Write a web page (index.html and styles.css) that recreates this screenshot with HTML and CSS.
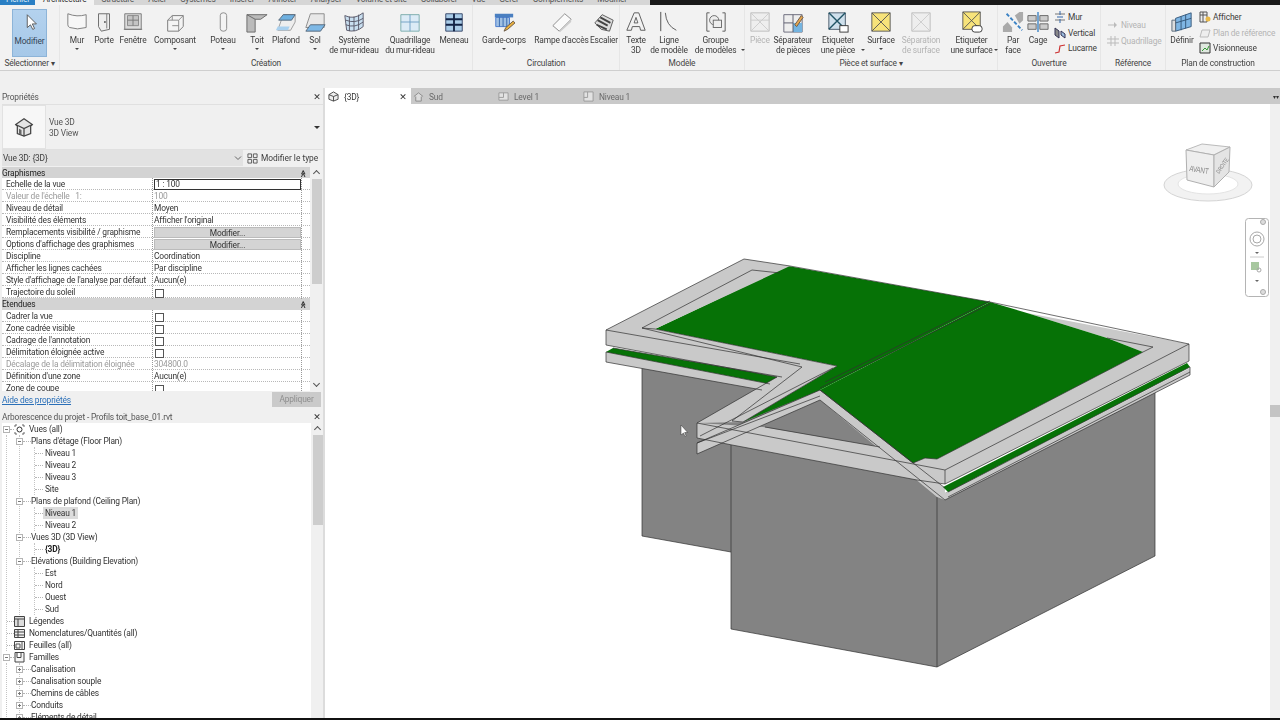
FILE: index.html
```html
<!DOCTYPE html>
<html lang="fr">
<head>
<meta charset="utf-8">
<title>Revit - Profils toit_base_01.rvt</title>
<link rel="stylesheet" href="styles.css">
</head>
<body>
<div class="app">
  <nav class="menu">
    <span class="mtab file">Fichier</span><span class="mtab active">Architecture</span><span class="mtab">Structure</span><span class="mtab">Acier</span><span class="mtab">Systèmes</span><span class="mtab">Insérer</span><span class="mtab">Annoter</span><span class="mtab">Analyser</span><span class="mtab">Volume et site</span><span class="mtab">Collaborer</span><span class="mtab">Vue</span><span class="mtab">Gérer</span><span class="mtab">Compléments</span><span class="mtab">Modifier</span>
    <span class="menu-end"></span>
  </nav>

  <section class="ribbon">
    <div class="panel p-select">
      <div class="tools center">
        <div class="modify">
          <svg class="ico" viewBox="0 0 24 24"><path d="M9 3v14l3.500-3 2.500 5 2-1-2.500-5H19z" fill="#fff" stroke="#555"/></svg>
          <span class="lbl">Modifier</span>
        </div>
      </div>
      <div class="plabel">Sélectionner ▾</div>
    </div>

    <div class="panel p-create">
      <div class="tools">
        <div class="tool w34"><svg class="ico" viewBox="0 0 24 24"><path d="M2 3q10 4 20 1v14q-10 3-18 0q-2-1-2-3z" fill="#f7f7f7" stroke="#777"/></svg><span class="lbl">Mur</span><i class="caret"></i></div>
        <div class="tool w20"><svg class="ico" viewBox="0 0 24 24"><path d="M6 3h12v17l-9 2-3-5z" fill="#eee" stroke="#666"/><path d="M15 3v16" stroke="#777"/><circle cx="13" cy="12" r="1" fill="#555"/></svg><span class="lbl">Porte</span></div>
        <div class="tool w38"><svg class="ico" viewBox="0 0 24 24"><path d="M3 3h18v17H3z" fill="#ddd" stroke="#777"/><path d="M6 5h12v11H6z" fill="#c4c4c4" stroke="#888"/><path d="M12 5v11M6 10h12M2 20h20" stroke="#777"/></svg><span class="lbl">Fenêtre</span></div>
        <div class="tool w46"><svg class="ico" viewBox="0 0 24 24"><path d="M4 10l5-5h12v12l-5 5H4z" fill="#f4f4f4" stroke="#777"/><path d="M4 10h12v12M16 10l5-5M9 5v5M9 16h7" fill="none" stroke="#888"/></svg><span class="lbl">Composant</span><i class="caret"></i></div>
        <div class="tool w50"><svg class="ico" viewBox="0 0 24 24"><rect x="9" y="2" width="7" height="20" rx="3" fill="#f4f4f4" stroke="#888"/></svg><span class="lbl">Poteau</span><i class="caret"></i></div>
        <div class="tool w18"><svg class="ico" viewBox="0 0 24 24"><path d="M1 4h22l-7 5h-6v14H1z" fill="#bbb" stroke="#666"/><path d="M1 4l9 5" stroke="#666"/></svg><span class="lbl">Toit</span><i class="caret"></i></div>
        <div class="tool w40"><svg class="ico" viewBox="0 0 24 24"><path d="M9 4h13v8l-5 9H3z" fill="#eee" stroke="#999"/><path d="M9 4h13l-4 6H4z" fill="#6eb0e0" stroke="#567"/><path d="M3 17h13l-2 4H1z" fill="#a9d0ee"/></svg><span class="lbl">Plafond</span></div>
        <div class="tool w18"><svg class="ico" viewBox="0 0 24 24"><path d="M7 3h15v15H2z" fill="#e8e8e8" stroke="#888"/><path d="M7 15h16l-5 7H2z" fill="#7db8e6" stroke="#567"/></svg><span class="lbl">Sol</span><i class="caret"></i></div>
        <div class="tool w60"><svg class="ico" viewBox="0 0 24 24"><path d="M2 5q10 5 20-3v15q-8 7-18 4z" fill="#c9dff0" stroke="#556"/><path d="M7 6v16M12 6v16M17 4v16M3 10q10 4 19-2M3 15q10 4 19-3" fill="none" stroke="#556"/></svg><span class="lbl">Système<br>de mur-rideau</span></div>
        <div class="tool w52"><svg class="ico" viewBox="0 0 24 24"><path d="M2 4h20v18H2z" fill="#dcebf6" stroke="#7aa"/><path d="M2 12h20M12 4v18" stroke="#6f9fc4"/></svg><span class="lbl">Quadrillage<br>du mur-rideau</span></div>
        <div class="tool w36"><svg class="ico" viewBox="0 0 24 24"><path d="M3 3h18v19H3z" fill="#a9cce8" stroke="#346"/><path d="M12 3v19M3 9h18M3 15h18" stroke="#124" stroke-width="2"/></svg><span class="lbl">Meneau</span></div>
      </div>
      <div class="plabel">Création</div>
    </div>

    <div class="panel p-circ">
      <div class="tools">
        <div class="tool w62"><svg class="ico" viewBox="0 0 24 24"><path d="M2 3h20v4H2z" fill="#4a7fc0"/><path d="M3 7h15v10H3z" fill="#9fc0e4" stroke="#47c"/><path d="M7 7v10M11 7v10M15 7v10" stroke="#36a"/><path d="M12 22l2-4 8-7 2 2-8 7z" fill="#e8b040" stroke="#654"/></svg><span class="lbl">Garde-corps</span><i class="caret"></i></div>
        <div class="tool w53"><svg class="ico" viewBox="0 0 24 24"><path d="M2 16L15 3l7 6-13 13z" fill="#fafafa" stroke="#888"/><path d="M9 22l13-13v3L10 23z" fill="#ccc"/></svg><span class="lbl">Rampe d'accès</span></div>
        <div class="tool w32"><svg class="ico" viewBox="0 0 24 24"><path d="M2 13l8-9 12 6-4 12-9-2z" fill="#ddd" stroke="#555"/><path d="M5 10l11 6M8 7l11 6M4 15l11 5" stroke="#444" stroke-width="2"/></svg><span class="lbl">Escalier</span></div>
      </div>
      <div class="plabel">Circulation</div>
    </div>

    <div class="panel p-model">
      <div class="tools">
        <div class="tool w32"><svg class="ico" viewBox="0 0 24 24"><path d="M2 21L10 2h5l7 19h-5l-1-4H8l-1 4z" fill="#f2f2f2" stroke="#555"/><path d="M10 13l2-6 2 6z" fill="#fff" stroke="#555"/></svg><span class="lbl">Texte<br>3D</span></div>
        <div class="tool w34"><svg class="ico" viewBox="0 0 24 24"><path d="M3 1v21" stroke="#444" fill="none"/><path d="M8 2q1 14 12 19" stroke="#555" fill="none"/></svg><span class="lbl">Ligne<br>de modèle</span></div>
        <div class="tool w59"><svg class="ico" viewBox="0 0 24 24"><path d="M5 2H2v20h3M19 2h3v20h-3" fill="none" stroke="#555"/><circle cx="10" cy="10" r="5" fill="#eee" stroke="#666"/><rect x="9" y="10" width="9" height="8" fill="#eee" stroke="#666"/></svg><span class="lbl">Groupe<br>de modèles</span><i class="caret side"></i></div>
      </div>
      <div class="plabel">Modèle</div>
    </div>

    <div class="panel p-room">
      <div class="tools">
        <div class="tool w30 off"><svg class="ico" viewBox="0 0 24 24"><path d="M2 2h20v20H2z" fill="#eee" stroke="#bbb"/><path d="M2 22L22 2M2 2l20 20M2 10h20" stroke="#ccc"/></svg><span class="lbl">Pièce</span></div>
        <div class="tool w36"><svg class="ico" viewBox="0 0 24 24"><path d="M2 4h20v19H2z" fill="#eee" stroke="#667"/><path d="M12 13h10v10H12z" fill="#74b4e0"/><path d="M12 4v19M2 13h10" stroke="#556"/><path d="M14 15l7-10 2 2-7 10z" fill="#e8a850" stroke="#654"/></svg><span class="lbl">Séparateur<br>de pièces</span></div>
        <div class="tool w54"><svg class="ico" viewBox="0 0 24 24"><path d="M2 2h18v18H2z" fill="#cfe0ec" stroke="#456"/><path d="M2 2l18 18M20 2L2 20" stroke="#256" stroke-width="1.500"/><rect x="14" y="16" width="9" height="7" fill="#fff" stroke="#333"/></svg><span class="lbl">Etiqueter<br>une pièce</span><i class="caret side"></i></div>
        <div class="tool w32"><svg class="ico" viewBox="0 0 24 24"><path d="M2 2h20v20H2z" fill="#f7e37a" stroke="#555"/><path d="M2 2l20 20M22 2L2 22" stroke="#555"/></svg><span class="lbl">Surface</span><i class="caret"></i></div>
        <div class="tool w48 off"><svg class="ico" viewBox="0 0 24 24"><path d="M2 2h20v20H2z" fill="#eee" stroke="#bbb"/><path d="M2 2l20 20M22 2L2 22" stroke="#ccc"/></svg><span class="lbl">Séparation<br>de surface</span></div>
        <div class="tool w53"><svg class="ico" viewBox="0 0 24 24"><path d="M2 1h19v19H2z" fill="#f7e37a" stroke="#555"/><path d="M2 1l19 19M21 1L2 20" stroke="#555"/><rect x="12" y="16" width="11" height="7" rx="3" fill="#fff" stroke="#333"/></svg><span class="lbl">Etiqueter<br>une surface</span><i class="caret side"></i></div>
      </div>
      <div class="plabel">Pièce et surface ▾</div>
    </div>

    <div class="panel p-open">
      <div class="tools">
        <div class="tool w30"><svg class="ico" viewBox="0 0 24 24"><path d="M14 5l5-4h4v9l-4 4z" fill="#aaa"/><path d="M1 17l5-5 5 6v5H1z" fill="#aaa"/><path d="M5 3l17 18" stroke="#3b82c4" stroke-width="2" stroke-dasharray="4 2"/></svg><span class="lbl">Par<br>face</span></div>
        <div class="tool w20"><svg class="ico" viewBox="0 0 24 24"><path d="M1 5h9v6H1zM14 5h9v6h-9zM1 14h9v6H1zM14 14h9v6h-9z" fill="#ccc" stroke="#666"/><path d="M12 1v22" stroke="#3b82c4" stroke-width="1.500"/></svg><span class="lbl">Cage</span></div>
        <div class="small-col col-open">
          <div class="small"><svg class="sico" viewBox="0 0 12 12"><path d="M1 3h10M1 9h10" stroke="#777"/><path d="M6 0v4M6 8v4M3 6h6" stroke="#36a"/></svg>Mur</div>
          <div class="small"><svg class="sico" viewBox="0 0 12 12"><path d="M1 1l4 3v7L1 8z" fill="#888" stroke="#335"/><path d="M7 4l4 3v4L7 8z" fill="#9bd" stroke="#335"/></svg>Vertical</div>
          <div class="small"><svg class="sico" viewBox="0 0 12 12"><path d="M1 11l4-1 1-6 5-1" fill="none" stroke="#c33" stroke-width="1.200"/></svg>Lucarne</div>
        </div>
      </div>
      <div class="plabel">Ouverture</div>
    </div>

    <div class="panel p-ref">
      <div class="tools">
        <div class="small-col col-ref off">
          <div class="small row-mid"><svg class="sico" viewBox="0 0 12 12"><path d="M1 6h6" stroke="#bbb"/><path d="M7 3l3 3-3 3z" fill="#bbb"/></svg>Niveau</div>
          <div class="small row-mid"><svg class="sico" viewBox="0 0 12 12"><path d="M0 4h12M0 8h12M4 1v10M8 1v10" stroke="#bbb"/></svg>Quadrillage</div>
        </div>
      </div>
      <div class="plabel">Référence</div>
    </div>

    <div class="panel p-plan">
      <div class="tools">
        <div class="tool w32"><svg class="ico" viewBox="0 0 24 24"><path d="M5 8l17-6v15L5 22z" fill="#7fb6e4" stroke="#357"/><path d="M1 10h4v12H1z" fill="#ddd" stroke="#567"/><path d="M11 6v15M16 4v15M5 13l17-5" stroke="#357"/></svg><span class="lbl">Définir</span></div>
        <div class="small-col col-plan">
          <div class="small"><svg class="sico" viewBox="0 0 12 12"><path d="M1 1h7v10H1z" fill="#eee" stroke="#555"/><circle cx="9" cy="8" r="2.500" fill="#e9b949"/><path d="M1 4h7M4 1v10" stroke="#555"/></svg>Afficher</div>
          <div class="small off"><svg class="sico" viewBox="0 0 12 12"><path d="M3 3h8L9 10H1z" fill="#eee" stroke="#bbb"/></svg>Plan de référence</div>
          <div class="small"><svg class="sico" viewBox="0 0 12 12"><path d="M1 1h10v10H1z" fill="#dfe8df" stroke="#333"/><path d="M3 9l3-3 2 2 2-4" stroke="#393" fill="none"/></svg>Visionneuse</div>
        </div>
      </div>
      <div class="plabel">Plan de construction</div>
    </div>
  </section>

  <div class="options"></div>

  <main class="main">
    <aside class="left">
      <div class="ptitle"><span>Propriétés</span><span class="close">✕</span></div>
      <div class="typebox">
        <div class="typeicon"><svg class="houseico" viewBox="0 0 24 24"><path d="M12 2L2 9l2 2v9l8 3 8-3v-9l2-2z" fill="#e4e4e4" stroke="#444" stroke-width="1.500"/><path d="M2 9l10 5 10-5M12 14v9" fill="none" stroke="#444" stroke-width="1.500"/><path d="M6 14l3 1.500v6L6 20z" fill="#666"/></svg></div>
        <div class="typetext"><span>Vue 3D</span><span>3D View</span></div>
        <span class="typecaret"></span>
      </div>
      <div class="selrow">
        <div class="select"><span>Vue 3D: {3D}</span><svg class="chev" viewBox="0 0 8 8"><path d="M1 2.500l3 3 3-3" fill="none" stroke="#666"/></svg></div>
        <div class="typebtn"><svg class="btnico" viewBox="0 0 12 12"><path d="M1 1h4v4H1zM7 1h4v4H7zM1 7h4v4H1zM7 7h4v4H7z" fill="#eee" stroke="#555"/></svg>Modifier le type</div>
      </div>

      <div class="proparea">
        <div class="proptable">
          <div class="pgroup" id="g1"><span>Graphismes</span><span class="fold">≪</span></div>
          <div class="prow"><span>Echelle de la vue</span><span class="val"><b class="input">1 : 100</b></span><i></i></div>
          <div class="prow dim"><span>Valeur de l'échelle &nbsp;&nbsp;1:</span><span class="val">100</span><i></i></div>
          <div class="prow"><span>Niveau de détail</span><span class="val">Moyen</span><i></i></div>
          <div class="prow"><span>Visibilité des éléments</span><span class="val">Afficher l'original</span><i></i></div>
          <div class="prow"><span>Remplacements visibilité / graphisme</span><span class="val"><b class="btn">Modifier...</b></span><i></i></div>
          <div class="prow"><span>Options d'affichage des graphismes</span><span class="val"><b class="btn">Modifier...</b></span><i></i></div>
          <div class="prow"><span>Discipline</span><span class="val">Coordination</span><i></i></div>
          <div class="prow"><span>Afficher les lignes cachées</span><span class="val">Par discipline</span><i></i></div>
          <div class="prow"><span>Style d'affichage de l'analyse par défaut</span><span class="val">Aucun(e)</span><i></i></div>
          <div class="prow"><span>Trajectoire du soleil</span><span class="val"><b class="check"></b></span><i></i></div>
          <div class="pgroup"><span>Etendues</span><span class="fold">≪</span></div>
          <div class="prow"><span>Cadrer la vue</span><span class="val"><b class="check"></b></span><i></i></div>
          <div class="prow"><span>Zone cadrée visible</span><span class="val"><b class="check"></b></span><i></i></div>
          <div class="prow"><span>Cadrage de l'annotation</span><span class="val"><b class="check"></b></span><i></i></div>
          <div class="prow"><span>Délimitation éloignée active</span><span class="val"><b class="check"></b></span><i></i></div>
          <div class="prow dim"><span>Décalage de la délimitation éloignée</span><span class="val">304800.0</span><i></i></div>
          <div class="prow"><span>Définition d'une zone</span><span class="val">Aucun(e)</span><i></i></div>
          <div class="prow"><span>Zone de coupe</span><span class="val"><b class="check"></b></span><i></i></div>
        </div>
        <div class="sb sb-prop"><span class="arrow up"></span><span class="thumb"></span><span class="sp"></span><span class="arrow down"></span></div>
      </div>
      <div class="helprow"><a class="help">Aide des propriétés</a><span class="apply">Appliquer</span></div>

      <div class="ptitle ptitle2"><span>Arborescence du projet - Profils toit_base_01.rvt</span><span class="close">✕</span></div>
      <div class="treearea">
        <div class="tree">
          <div class="troot"><span class="exp"></span><span class="dash d5"></span><svg class="tico" viewBox="0 0 11 11"><path d="M1 3V1h2M8 1h2v2M1 8v2h2M8 10h2V8" fill="none" stroke="#666"/><circle cx="5.500" cy="5.500" r="2.500" fill="none" stroke="#333"/></svg><span class="ttext">Vues (all)</span></div>
          <div class="rootwrap">
            <div class="bwrap">
              <div class="tl1"><span class="exp neg"></span><span class="dash d8"></span><span class="ttext1">Plans d'étage (Floor Plan)</span></div>
              <div class="lwrap">
                <div class="tl2"><span class="dash d8"></span><span class="ttext2">Niveau 1</span></div>
                <div class="tl2"><span class="dash d8"></span><span class="ttext2">Niveau 2</span></div>
                <div class="tl2"><span class="dash d8"></span><span class="ttext2">Niveau 3</span></div>
                <div class="tl2"><span class="dash d8"></span><span class="ttext2">Site</span></div>
              </div>
              <div class="tl1"><span class="exp neg"></span><span class="dash d8"></span><span class="ttext1">Plans de plafond (Ceiling Plan)</span></div>
              <div class="lwrap">
                <div class="tl2"><span class="dash d8"></span><span class="ttext2 sel">Niveau 1</span></div>
                <div class="tl2"><span class="dash d8"></span><span class="ttext2">Niveau 2</span></div>
              </div>
              <div class="tl1"><span class="exp neg"></span><span class="dash d8"></span><span class="ttext1">Vues 3D (3D View)</span></div>
              <div class="lwrap">
                <div class="tl2"><span class="dash d8"></span><span class="ttext2 strong">{3D}</span></div>
              </div>
              <div class="tl1"><span class="exp neg"></span><span class="dash d8"></span><span class="ttext1">Elévations (Building Elevation)</span></div>
              <div class="lwrap">
                <div class="tl2"><span class="dash d8"></span><span class="ttext2">Est</span></div>
                <div class="tl2"><span class="dash d8"></span><span class="ttext2">Nord</span></div>
                <div class="tl2"><span class="dash d8"></span><span class="ttext2">Ouest</span></div>
                <div class="tl2"><span class="dash d8"></span><span class="ttext2">Sud</span></div>
              </div>
            </div>
            <div class="tl0"><span class="dash d7"></span><svg class="tico" viewBox="0 0 11 11"><path d="M.5.5h10v10H.5z" fill="#ddd" stroke="#444"/><path d="M.5 3h10M4 3v7" stroke="#444"/></svg><span class="ttext">Légendes</span></div>
            <div class="tl0"><span class="dash d7"></span><svg class="tico" viewBox="0 0 11 11"><path d="M.5 1.500h10v8H.5z" fill="#eee" stroke="#444"/><path d="M.5 4h10M.5 7h10M4 1.500v8" stroke="#444"/></svg><span class="ttext">Nomenclatures/Quantités (all)</span></div>
            <div class="tl0"><span class="dash d7"></span><svg class="tico" viewBox="0 0 11 11"><path d="M.5 1.500h10v8H.5z" fill="#f5f5f5" stroke="#444"/><path d="M2 4h4v4H2zM8 1.500v8" fill="none" stroke="#555"/></svg><span class="ttext">Feuilles (all)</span></div>
          </div>
          <div class="troot"><span class="exp"></span><span class="dash d5"></span><svg class="tico" viewBox="0 0 11 11"><path d="M1 .5h9v9.500H1zM3 .5v5h4v-5" fill="#f5f5f5" stroke="#444"/></svg><span class="ttext">Familles</span></div>
          <div class="rootwrap">
            <div class="bwrap">
              <div class="tl1"><span class="exp plus neg"></span><span class="dash d8"></span><span class="ttext1">Canalisation</span></div>
              <div class="tl1"><span class="exp plus neg"></span><span class="dash d8"></span><span class="ttext1">Canalisation souple</span></div>
              <div class="tl1"><span class="exp plus neg"></span><span class="dash d8"></span><span class="ttext1">Chemins de câbles</span></div>
              <div class="tl1"><span class="exp plus neg"></span><span class="dash d8"></span><span class="ttext1">Conduits</span></div>
              <div class="tl1"><span class="exp plus neg"></span><span class="dash d8"></span><span class="ttext1">Eléments de détail</span></div>
            </div>
          </div>
        </div>
        <div class="sb sb-tree"><span class="arrow up"></span><span class="thumb"></span></div>
      </div>
    </aside>

    <section class="viewpane">
      <div class="vtabs">
        <div class="vtab current"><svg class="vico" viewBox="0 0 12 12"><path d="M6 1L1 4v5l5 2 5-2V4z" fill="#eee" stroke="#444"/><path d="M1 4l5 2 5-2M6 6v5" fill="none" stroke="#444"/></svg><span>{3D}</span><span class="close tabx">✕</span></div>
        <div class="vtab"><svg class="vico" viewBox="0 0 12 12"><path d="M1 6l5-4 5 4M3 6v5h6V6" fill="#ddd" stroke="#888"/></svg><span>Sud</span></div>
        <div class="vtab"><svg class="vico" viewBox="0 0 12 12"><path d="M1 2h10v8H1z" fill="#e2e2e2" stroke="#999"/><path d="M6 2v5H1" fill="none" stroke="#999"/></svg><span>Level 1</span></div>
        <div class="vtab"><svg class="vico" viewBox="0 0 12 12"><path d="M1 1h10v10H1z" fill="#e2e2e2" stroke="#999"/><path d="M5 1v6H1" fill="none" stroke="#999"/></svg><span>Niveau 1</span></div>
        <span class="vtabs-end">▾▾</span>
      </div>
      <div class="viewbody">
        <svg class="scene" viewBox="325 104 945 614">
          <g class="wall">
            <polygon points="642,366 780,390 820,390 945,490 937,497 937,667 731,629 731,552 642,536"/>
            <polygon points="937,497 1155,388 1155,556 937,667"/>
          </g>
          <g class="edge">
            <path d="M731 445V629M642 366V536L731 552M731 629L937 667L1155 556V388M937 497V667"/>
          </g>
          <g class="plate">
            <polygon points="606,352 770,384 762,390 606,362"/>
            <polygon points="697,423 763,427 880,447 917,458 945,470 945,483 917,480 732,445 697,438"/>
            <polygon points="820,390 697,443 697,454 820,400"/>
            <polygon points="820,390 945,488 945,500 937,497 820,400"/>
            <polygon points="948,492 1190,368 1190,375 945,500 938,495"/>
          </g>
          <g class="roof">
            <polygon points="613,348 782,377 770,384 606,352"/>
            <polygon points="943,487 1187,363 1190,367 948,492"/>
          </g>
          <g class="plate flat">
            <polygon points="1027,313 1189,344 1189,361 945,484 945,470 925,458 937,459 1143,352 1107,338"/>
            <polygon points="913,463 925,458 937,459 945,470 945,484 917,480"/>
          </g>
          <g class="roof">
            <polygon points="655,329 788,266 990,302 820,390 743,422 837,366"/>
            <polygon points="990,302 1027,313 1107,338 1143,352 937,459 925,458 913,463 820,390"/>
          </g>
          <g class="plate flat">
            <polygon points="606,330 744,259 790,266 655,329 837,366 743,422 697,423 777,377 606,345"/>
          </g>
          <g class="edge">
            <path d="M606 330L744 259L790 266L990 302L1189 344V361L945 484V470L1189 344M606 330V345L777 377L697 423V438M606 330L800 364"/>
            <path d="M642 328L752 270L780 273M642 328L655 329L837 366L743 422L732 421L802 367L642 328M833 368L700 436"/>
            <path d="M990 301L825 382M990 304L820 388"/>
            <path d="M1107 338L1153 347L1143 352L937 459L925 458L913 463L820 390"/>
            <path d="M697 423L945 470M697 438L732 445L917 480L945 484M765 427L880 447"/>
            <path d="M820 390L697 443V454L820 400L945 500L1190 375V367L948 492M948 497L1190 372M606 352V362L762 390M606 352L770 384M820 390L945 488M697 443L820 396M613 348L782 377"/>
          </g>
          <path class="cursor" d="M681 425v10l2.500-2 1.500 3.500 1.200-.5-1.500-3.500h3z"/>

          <g class="cube">
            <ellipse cx="1208" cy="185" rx="44" ry="16" class="ring"/>
            <ellipse cx="1208" cy="184" rx="30" ry="10" class="ringin"/>
            <polygon points="1186,150 1202,144 1230,147 1214,155" class="ctop"/>
            <polygon points="1186,150 1214,155 1214,187 1187,180" class="cfront"/>
            <polygon points="1214,155 1230,147 1229,172 1214,187" class="cside"/>
            <text class="clabel" transform="translate(1189,171) rotate(9) scale(.9,1.150)">AVANT</text>
            <text class="clabel small-c" transform="translate(1219,174) rotate(-55) scale(.8,1)">DROITE</text>
          </g>
          <g class="navbar">
            <rect x="1245.500" y="218.500" width="23" height="78" rx="3" class="navbox"/>
            <circle cx="1263" cy="222" r="2.500" class="navdot"/>
            <circle cx="1263" cy="292" r="2.500" class="navdot"/>
            <circle cx="1257" cy="239" r="7" class="navw"/>
            <circle cx="1257" cy="239" r="4" class="navw"/>
            <path d="M1255 252l2 2 2-2z" class="navc"/>
            <path d="M1250 257h14" class="navl"/>
            <rect x="1251" y="262" width="8" height="8" class="navz"/>
            <circle cx="1259" cy="270" r="2" class="navw"/>
            <path d="M1255 280l2 2 2-2z" class="navc"/>
          </g>
        </svg>
        <div class="vscroll"><span class="vthumb"></span></div>
      </div>
    </section>
  </main>
  <div class="bottom"></div>
</div>
</body>
</html>
```
FILE: styles.css
```css
* { box-sizing: border-box; }
html, body { margin: 0; padding: 0; }
body { width: 1280px; height: 720px; overflow: hidden; background: #f0f0f0; font-family: Roboto, "Noto Sans", sans-serif; font-size: 8.4px; letter-spacing: -.16px; color: #3c3c3c; }
.app { width: 1280px; height: 720px; display: flex; flex-direction: column; filter: blur(.35px); }

/* top menu, cut by the window edge */
.menu { height: 5px; display: flex; align-items: flex-end; background: #d6d6d6; overflow: hidden; flex: none; }
.mtab { flex: none; line-height: 12px; height: 12px; padding: 0 7px; color: #555; }
.mtab.file { background: #2a7fc4; color: #dcecf8; width: 35px; padding: 0 6px; }
.mtab.active { background: #f3f3f3; color: #333; padding: 0 8px; }
.menu-end { flex: none; width: 630px; height: 5px; background: #1a1a1a; margin-left: auto; }

/* ribbon */
.ribbon { height: 66px; flex: none; display: flex; background: #f2f2f2; border-bottom: 1px solid #cfcfcf; }
.panel { height: 65px; display: flex; flex-direction: column; border-right: 1px solid #e6e6e6; flex: none; }
.p-select { width: 60px; }
.p-create { width: 413px; }
.p-circ { width: 147px; }
.p-model { width: 125px; }
.p-room { width: 253px; }
.p-open { width: 103px; }
.p-ref { width: 65px; }
.p-plan { width: 104px; border-right: 0; }
.tools { height: 51px; flex: none; display: flex; }
.tools.center { justify-content: center; }
.plabel { height: 14px; line-height: 15px; text-align: center; color: #444; }
.tool { flex: none; display: flex; flex-direction: column; align-items: center; padding-top: 6px; position: relative; white-space: nowrap; }
.w18 { width: 18px; } .w20 { width: 20px; } .w30 { width: 30px; } .w32 { width: 32px; } .w34 { width: 34px; }
.w36 { width: 36px; } .w38 { width: 38px; } .w40 { width: 40px; } .w46 { width: 46px; } .w48 { width: 48px; }
.w50 { width: 50px; } .w52 { width: 52px; } .w53 { width: 53px; } .w54 { width: 54px; } .w59 { width: 59px; }
.w60 { width: 60px; } .w62 { width: 62px; }
.ico { width: 22px; height: 22px; display: block; margin-bottom: 2px; flex: none; }
.lbl { line-height: 10px; text-align: center; display: block; }
.off { color: #b4b4b4; }
.caret { display: block; width: 0; height: 0; border: 2px solid transparent; border-top: 2px solid #444; border-bottom: 0; margin-top: 3px; }
.caret.side { position: absolute; right: 0; top: 44px; margin: 0; }
.modify { width: 35px; height: 48px; margin-top: 4px; background: linear-gradient(#b4d2ee, #a6c8e8); border: 1px solid #8db4d8; display: flex; flex-direction: column; align-items: center; padding-top: 2px; color: #345; }
.small-col { display: flex; flex-direction: column; padding-top: 4px; }
.small { height: 16px; display: flex; align-items: center; gap: 2px; white-space: nowrap; }
.sico { width: 12px; height: 12px; flex: none; }
.col-open { padding-left: 6px; }
.col-ref { padding-left: 6px; padding-top: 12px; }
.col-plan { padding-left: 1px; }
.row-mid { height: 16px; }

.options { height: 17px; flex: none; background: #f0f0f0; }

/* main area */
.main { flex: 1; min-height: 0; display: flex; }
.left { width: 325px; flex: none; display: flex; flex-direction: column; background: #f0f0f0; border-right: 2px solid #dcdcdc; }
.ptitle { height: 16px; flex: none; display: flex; align-items: center; justify-content: space-between; padding: 1px 1px 0 2px; color: #555; }
.ptitle2 { height: 14px; margin-top: 1px; }
.close { font-size: 9px; color: #333; width: 10px; text-align: center; font-family: "DejaVu Sans", sans-serif; font-weight: 700; }

.typebox { height: 46px; flex: none; display: flex; align-items: center; border-top: 1px solid #e0e0e0; border-bottom: 1px solid #e0e0e0; margin: 0 0 0 2px; padding-right: 3px; }
.typeicon { width: 44px; height: 44px; background: #f7f7f7; border: 1px solid #e2e2e2; display: flex; align-items: center; justify-content: center; flex: none; }
.houseico { width: 20px; height: 20px; }
.typetext { display: flex; flex-direction: column; line-height: 11px; margin-left: 3px; flex: 1; color: #555; padding-top: 1px; }
.typecaret { width: 0; height: 0; border: 3px solid transparent; border-top: 3px solid #333; border-bottom: 0; }
.selrow { height: 16px; flex: none; display: flex; padding-left: 2px; }
.select { width: 241px; height: 16px; display: flex; align-items: center; justify-content: space-between; background: #e2e2e2; padding: 0 1px; }
.chev { width: 8px; height: 8px; }
.typebtn { display: flex; align-items: center; gap: 3px; padding-left: 4px; white-space: nowrap; letter-spacing: 0; }
.btnico { width: 11px; height: 11px; }

.proparea { height: 224px; margin-top: 1px; flex: none; display: flex; }
.proptable { width: 308px; margin-left: 2px; height: 224px; overflow: hidden; background: #fff; }
.pgroup { height: 12px; background: #d3d3d3; display: flex; align-items: center; justify-content: space-between; padding-right: 3px; color: #222; }
#g1 { height: 11px; }
.fold { transform: rotate(90deg); font-size: 7px; color: #333; font-weight: 700; }
.prow { height: 12px; display: grid; grid-template-columns: 150px 150px 8px; border-bottom: 1px dotted #b8b8b8; line-height: 13px; white-space: nowrap; color: #333; }
.prow > span:first-child { padding-left: 4px; }
.prow .val { border-left: 1px dotted #999; border-right: 1px dotted #999; padding-left: 1px; display: flex; align-items: center; }
.prow.dim { color: #9a9a9a; }
.input { display: block; width: 148px; height: 11px; line-height: 9px; border: 1px solid #333; font-weight: 400; padding-left: 1px; color: #333; }
.btn { display: block; width: 148px; height: 11px; line-height: 10px; background: #d4d4d4; border: 1px solid #bbb; font-weight: 400; text-align: center; }
.check { display: block; width: 9px; height: 9px; border: 1px solid #555; background: #fff; margin: 1px 0 0 1px; }

.sb { width: 11px; flex: none; margin-left: 1px; display: flex; flex-direction: column; align-items: center; }
.thumb { width: 10px; background: #cdcdcd; display: block; }
.sb-prop .thumb { height: 105px; }
.sb-tree .thumb { height: 90px; }
.sp { flex: 1; }
.arrow { width: 5px; height: 12px; display: block; position: relative; flex: none; }
.arrow::after { content: ""; position: absolute; left: 0; top: 4px; width: 4px; height: 4px; border-left: 1px solid #555; border-top: 1px solid #555; transform: rotate(45deg); }
.arrow.down::after { transform: rotate(225deg); top: 2px; }

.helprow { height: 17px; flex: none; display: flex; align-items: center; justify-content: space-between; padding: 0 2px 0 2px; }
.help { color: #2a6fb8; text-decoration: underline; }
.apply { width: 49px; height: 15px; line-height: 15px; text-align: center; background: #cacaca; color: #8e8e8e; }

/* project tree */
.treearea { flex: 1; min-height: 0; display: flex; }
.tree { width: 309px; margin-left: 2px; background: #fff; overflow: hidden; flex: none; }
.troot, .tl0, .tl1, .tl2 { height: 12px; display: flex; align-items: center; white-space: nowrap; color: #333; }
.exp { width: 7px; height: 7px; border: 1px solid #b4b4b4; background: linear-gradient(#777, #777) center / 3px 1px no-repeat #fff; flex: none; margin-left: 1px; }
.exp.plus { background: linear-gradient(#777, #777) center / 3px 1px no-repeat, linear-gradient(#777, #777) center / 1px 3px no-repeat, #fff; }
.exp.neg { margin-left: -4px; }
.dash { display: block; border-top: 1px dotted #b4b4b4; flex: none; height: 0; }
.d5 { width: 4px; } .d7 { width: 7px; } .d8 { width: 8px; }
.tico { width: 11px; height: 11px; flex: none; }
.ttext { margin-left: 4px; }
.ttext1 { margin-left: 0; }
.ttext2 { margin-left: 2px; }
.rootwrap { margin-left: 4px; border-left: 1px dotted #c4c4c4; }
.bwrap { margin-left: 12px; border-left: 1px dotted #c4c4c4; }
.lwrap { margin-left: 14px; border-left: 1px dotted #c4c4c4; }
.sel { background: #dcdcdc; padding: 0 2px; margin-left: 0; line-height: 12px; }
.strong { font-weight: 700; color: #222; }

/* view */
.viewpane { flex: 1; min-width: 0; display: flex; flex-direction: column; background: #fff; }
.vtabs { height: 16px; flex: none; display: flex; background: #c9c9c9; align-items: center; }
.vtab { width: 85px; height: 16px; display: flex; align-items: center; padding: 1px 0 0 2px; color: #6a6a6a; flex: none; }
.vtab.current { width: 86px; padding-left: 3px; background: #fff; color: #333; }
.vico { width: 11px; height: 11px; margin-right: 5px; flex: none; }
.tabx { margin-left: auto; margin-right: 3px; }
.vtabs-end { margin-left: auto; font-size: 6px; color: #333; padding-right: 1px; }
.viewbody { flex: 1; min-height: 0; display: flex; }
.scene { width: 945px; height: 614px; flex: none; display: block; }
.vscroll { flex: 1; background: #f0f0f0; display: flex; flex-direction: column; padding-top: 301px; }
.vthumb { display: block; height: 12px; background: #c4c4c4; }
.wall polygon { fill: #838383; }
.plate polygon { fill: #c9c9c9; }
.roof polygon { fill: #067206; }
.edge path { fill: none; stroke: #303030; stroke-width: .7; }
.cursor { fill: #fff; stroke: #333; stroke-width: .5; }
.ring { fill: #f2f2f2; stroke: #d4d4d4; }
.ringin { fill: #fff; stroke: #e4e4e4; }
.ctop { fill: #f0f0f0; stroke: #bbb; }
.cfront { fill: #eeeeee; stroke: #b0b0b0; }
.cside { fill: #e4e4e4; stroke: #b0b0b0; }
.clabel { font-size: 7px; fill: #8a8a8a; font-family: "Liberation Sans", sans-serif; }
.small-c { font-size: 6px; }
.navbox { fill: #fff; stroke: #b4b4b4; }
.navdot { fill: #ddd; stroke: #aaa; }
.navw { fill: none; stroke: #a8a8a8; }
.navc { fill: #666; }
.navl { stroke: #ccc; fill: none; }
.navz { fill: #a8c8a0; }

.bottom { height: 2px; flex: none; background: #111; }
```
